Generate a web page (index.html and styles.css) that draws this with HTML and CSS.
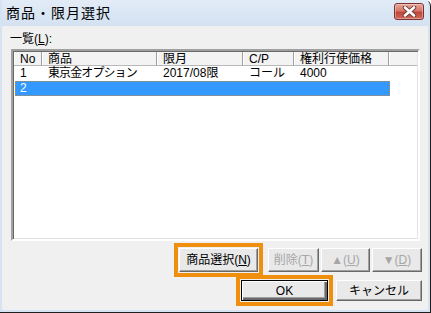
FILE: index.html
```html
<!DOCTYPE html>
<html lang="ja">
<head>
    <meta charset="UTF-8">
    <title>商品・限月選択</title>
    <link rel="stylesheet" href="styles.css">
</head>
<body>
    <div class="window">
        <div class="titlebar">
            <span class="title">商品・限月選択</span>
            <div class="close">
                <svg width="15" height="11" viewBox="0 0 15 11">
                    <path d="M3 1.5 L12 9.5 M12 1.5 L3 9.5" stroke="#6b3c3c" stroke-width="4.4" stroke-linecap="round"/>
                    <path d="M3 1.5 L12 9.5 M12 1.5 L3 9.5" stroke="#fff" stroke-width="2.6" stroke-linecap="round"/>
                </svg>
            </div>
        </div>
        <div class="client">
            <div class="label">一覧(<u>L</u>):</div>
            <div class="list">
                <div class="row head">
                    <div class="c no">No</div>
                    <div class="c name">商品</div>
                    <div class="c month">限月</div>
                    <div class="c cp">C/P</div>
                    <div class="c price">権利行使価格</div>
                    <div class="c fill"></div>
                </div>
                <div class="row">
                    <div class="c no">1</div>
                    <div class="c name narrow">東京金オプション</div>
                    <div class="c month">2017/08限</div>
                    <div class="c cp">コール</div>
                    <div class="c price">4000</div>
                </div>
                <div class="row sel">
                    <div class="c no">2</div>
                    <div class="c name"></div>
                    <div class="c month"></div>
                    <div class="c cp"></div>
                    <div class="c price"></div>
                </div>
            </div>
            <div class="btnrow top">
                <div class="btn mark w-select">商品選択(<u>N</u>)</div>
                <div class="group">
                    <div class="btn off w-del">削除(<u>T</u>)</div>
                    <div class="btn off w-up">▲(<u>U</u>)</div>
                    <div class="btn off w-down">▼(<u>D</u>)</div>
                </div>
            </div>
            <div class="btnrow bottom">
                <div class="btn def mark w-ok">OK</div>
                <div class="btn w-cancel">キャンセル</div>
            </div>
        </div>
    </div>
</body>
</html>
```

FILE: styles.css
```css
*{margin: 0;padding: 0;box-sizing: border-box;}
body{width: 431px;height: 313px;overflow: hidden;background: #fff;font-family: "Liberation Sans", "Noto Sans CJK JP", sans-serif;font-size: 12px;color: #000;}
u{text-decoration: underline;text-underline-offset: 1px;}

.window{width: 431px;height: 313px;display: flex;flex-direction: column;background: #d6e3f2;padding: 0 2px 2px 2px;border-right: 1px solid #1e1e1e;border-bottom: 1px solid #1e1e1e;border-top-right-radius: 6px;}
.titlebar{height: 26px;flex: none;display: flex;align-items: center;justify-content: space-between;padding: 0 4px 0 4px;background: linear-gradient(#e2ecf7, #d3e1f1);}
.title{font-size: 14px;letter-spacing: 1px;line-height: 16px;color: #000;margin-top: -1px;}
.close{width: 30px;height: 17px;margin-top: -4px;border: 1px solid #7c3030;border-radius: 3px;background: linear-gradient(#e6a596 0%, #d4786a 45%, #c0463a 55%, #cf6a5a 100%);display: flex;align-items: center;justify-content: center;box-shadow: inset 0 0 0 1px rgba(255,255,255,0.35);}

.client{flex: 1;background: #f0f0f0;display: flex;flex-direction: column;padding: 6px 6px 0 9px;}
.label{line-height: 14px;height: 14px;margin-left: -1px;}
.list{margin-top: 3px;width: 409px;height: 192px;background: #fff;border: 2px solid;border-color: #a0a0a0 #fff #fff #a0a0a0;box-shadow: inset 1px 1px #696969, inset -1px -1px #e3e3e3;padding: 1px 1px 0 1px;}

.row{display: flex;height: 15px;line-height: 15px;white-space: nowrap;}
.row.head{height: 14px;line-height: 14px;}
.head .c{background: #f3f3f3;border-right: 1px solid #a0a0a0;border-bottom: 1px solid #b8b8b8;box-shadow: inset 1px 0 #fff;}
.head .fill{flex: 1;border-right: none;}
.c{padding-left: 6px;flex: none;}
.no{width: 28px;}
.name{width: 115px;}
.month{width: 86px;}
.cp{width: 51px;}
.price{width: 95px;}
.narrow{letter-spacing: -0.9px;}
.row.sel{width: 375px;margin-left: 1px;background: #3399ff;color: #fff;outline: 1px dotted #c48a45;outline-offset: -1px;}
.row.sel .no{width: 27px;padding-left: 5px;}

.btnrow{display: flex;justify-content: flex-end;}
.btnrow.top{margin-top: 7px;gap: 10px;}
.btnrow.bottom{margin-top: 8px;gap: 8px;}
.group{display: flex;gap: 2px;}
.btn{height: 24px;display: flex;align-items: center;justify-content: center;background: #e9e9e9;border: 1px solid;border-color: #fff #696969 #696969 #fff;box-shadow: inset -1px -1px #a0a0a0;line-height: 14px;}
.bottom .btn{height: 21px;}
.btn.off{color: #a6a6a6;}
.btn.def{border-color: #000;box-shadow: inset 1px 1px #fff, inset -2px -2px #696969, inset -3px -3px #a0a0a0;}
.btn.mark{outline: 4px solid #ef8f0d;outline-offset: 1px;}
.w-select{width: 79px;}
.w-del{width: 51px;}
.w-up{width: 49px;}
.w-down{width: 50px;}
.w-ok{width: 87px;}
.w-cancel{width: 86px;}
```
